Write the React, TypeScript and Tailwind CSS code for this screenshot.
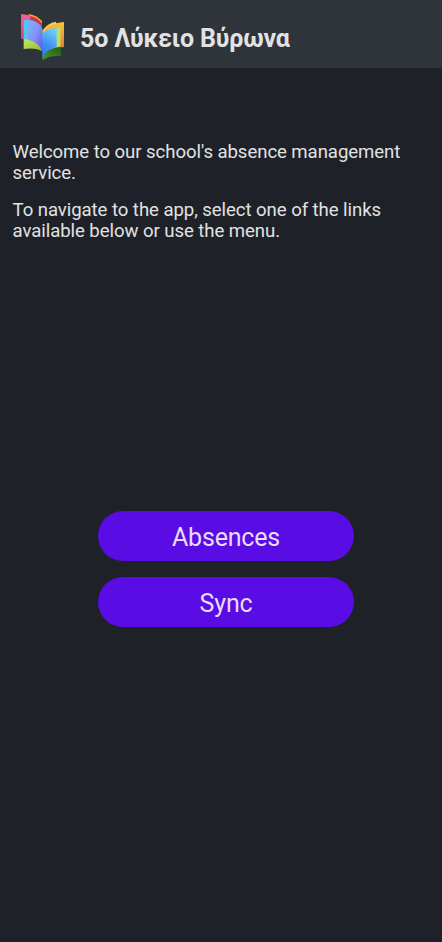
import React from "react";

function BookLogo() {
  return (
    <svg viewBox="0 0 192 192" className="mt-1 size-16 shrink-0" aria-hidden="true">
      <defs>
        <linearGradient id="pink" x1="0" y1="0" x2="0" y2="1">
          <stop offset="0" stopColor="#f0629c" />
          <stop offset="1" stopColor="#dc3c78" />
        </linearGradient>
        <linearGradient id="orange" x1="0" y1="0" x2="0" y2="1">
          <stop offset="0" stopColor="#f6c63c" />
          <stop offset="1" stopColor="#f0742e" />
        </linearGradient>
        <linearGradient id="violet" x1="0" y1="0" x2="1" y2="1">
          <stop offset="0" stopColor="#74b4fa" />
          <stop offset="0.5" stopColor="#8494f4" />
          <stop offset="1" stopColor="#7048e8" />
        </linearGradient>
        <linearGradient id="blue" x1="0.6" y1="0" x2="0.3" y2="1">
          <stop offset="0" stopColor="#6cd0fa" />
          <stop offset="0.6" stopColor="#3f8cf6" />
          <stop offset="1" stopColor="#3478f4" />
        </linearGradient>
        <linearGradient id="lime" x1="0" y1="0" x2="1" y2="1">
          <stop offset="0" stopColor="#c6e860" />
          <stop offset="1" stopColor="#86bc34" />
        </linearGradient>
        <linearGradient id="green" x1="1" y1="0" x2="0" y2="1">
          <stop offset="0" stopColor="#1e5c1c" />
          <stop offset="1" stopColor="#4c9a28" />
        </linearGradient>
      </defs>
      <path d="M54 30Q80 33 96 51V60L62 40Z" fill="#f5a52c" />
      <path d="M33 30Q76 34 95 58V76L42 106L33 104Z" fill="url(#pink)" />
      <path d="M62 36Q84 42 95 58V68L60 48Z" fill="#cf3550" />
      <path d="M41 104H54Q86 112 97 142Q76 130 41 135Z" fill="url(#lime)" />
      <path d="M97 80Q112 57 138 53V70L97 90Z" fill="#f6d65a" />
      <path d="M98 86Q116 56 162 54V129L148 131V72Z" fill="url(#orange)" />
      <path d="M153 126V156Q116 154 97 169L99 150Q112 132 153 126Z" fill="url(#green)" />
      <path d="M138 72L152 71V128Q112 132 98 154L104 140Z" fill="#c0dc62" />
      <path d="M41 48Q78 44 97 74V140Q82 108 41 105Z" fill="#49c9f4" />
      <path d="M54 49Q84 48 97 74V140Q86 114 54 107Z" fill="url(#violet)" />
      <path d="M96 91Q112 72 140 72V128Q108 136 97 163Z" fill="url(#blue)" />
    </svg>
  );
}

function LinkButton({ label }: { label: string }) {
  return (
    <button className="h-[50px] w-64 rounded-full bg-[#590de4] pt-[3px] text-[25px] leading-none tracking-[-0.2px] text-[#e8dcf8]">
      {label}
    </button>
  );
}

export default function App() {
  return (
    <div className="flex h-[942px] w-[442px] flex-col bg-[#1e2128] font-['Roboto',sans-serif] text-[#e2e2e2]">
      <header className="flex h-[68px] shrink-0 items-center bg-[#2f343b] pl-[10px]">
        <BookLogo />
        <h1 className="ml-[6px] pt-[9px] text-[25px] leading-none font-bold tracking-[-0.17px] whitespace-nowrap">5ο Λύκειο Βύρωνα</h1>
      </header>
      <main className="flex flex-col">
        <div className="mt-[74.4px] h-[368.6px] pl-[12.5px] text-[18.6px] leading-[20.6px] tracking-[-0.07px]">
          <p className="whitespace-nowrap">
            Welcome to our school's absence management
            <br />
            service.
          </p>
          <p className="mt-[16.4px] whitespace-nowrap">
            To navigate to the app, select one of the links
            <br />
            available below or use the menu.
          </p>
        </div>
        <nav className="ml-[98px] flex flex-col gap-4">
          <LinkButton label="Absences" />
          <LinkButton label="Sync" />
        </nav>
      </main>
    </div>
  );
}
